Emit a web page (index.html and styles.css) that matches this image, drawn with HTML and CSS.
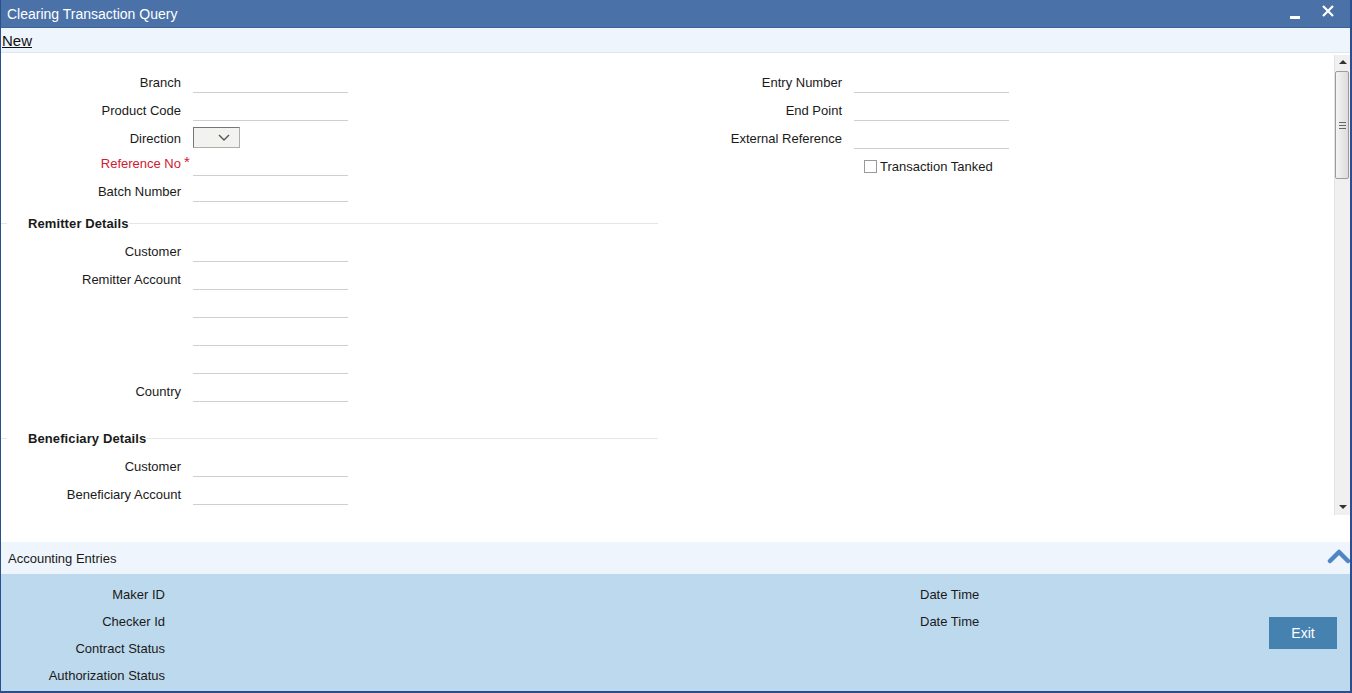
FILE: index.html
```html
<!DOCTYPE html>
<html>
<head>
<meta charset="utf-8">
<title>Clearing Transaction Query</title>
<link rel="stylesheet" href="styles.css">
</head>
<body>
<div class="window">
  <div class="titlebar">
    <span class="title">Clearing Transaction Query</span>
    <div class="win-ctrls">
      <span class="minimize"></span>
      <svg class="close" width="12" height="12" viewBox="0 0 12 12"><path d="M1 1 L11 11 M11 1 L1 11" stroke="#fff" stroke-width="2.2" fill="none"/></svg>
    </div>
  </div>
  <div class="toolbar"><a class="new-link">New</a></div>
  <div class="content">
    <div class="form">
      <div class="top">
        <div class="col-left">
          <div class="row"><label class="lbl">Branch</label><div class="inp"></div></div>
          <div class="row"><label class="lbl">Product Code</label><div class="inp"></div></div>
          <div class="row"><label class="lbl">Direction</label>
            <div class="select"><svg width="12" height="7" viewBox="0 0 12 7"><path d="M1 1 L6 6 L11 1" stroke="#555" stroke-width="1.4" fill="none"/></svg></div>
          </div>
          <div class="row short"><label class="lbl req">Reference No<span class="star">*</span></label><div class="inp"></div></div>
          <div class="row"><label class="lbl">Batch Number</label><div class="inp"></div></div>
        </div>
        <div class="col-right">
          <div class="row"><label class="lbl rl">Entry Number</label><div class="inp rinp"></div></div>
          <div class="row"><label class="lbl rl">End Point</label><div class="inp rinp"></div></div>
          <div class="row"><label class="lbl rl">External Reference</label><div class="inp rinp"></div></div>
          <div class="row check-row"><span class="checkbox"></span><span class="check-text">Transaction Tanked</span></div>
        </div>
      </div>
      <div class="section">
        <div class="sec-head"><span class="sec-title">Remitter Details</span></div>
        <div class="row"><label class="lbl">Customer</label><div class="inp"></div></div>
        <div class="row"><label class="lbl">Remitter Account</label><div class="inp"></div></div>
        <div class="row"><label class="lbl"></label><div class="inp"></div></div>
        <div class="row"><label class="lbl"></label><div class="inp"></div></div>
        <div class="row"><label class="lbl"></label><div class="inp"></div></div>
        <div class="row"><label class="lbl">Country</label><div class="inp"></div></div>
      </div>
      <div class="section sec2">
        <div class="sec-head"><span class="sec-title">Beneficiary Details</span></div>
        <div class="row"><label class="lbl">Customer</label><div class="inp"></div></div>
        <div class="row"><label class="lbl">Beneficiary Account</label><div class="inp"></div></div>
      </div>
    </div>
    <div class="scroll-col">
      <div class="scrollbar">
        <div class="arrow up"></div>
        <div class="thumb"><span class="grip"></span></div>
        <div class="track"></div>
        <div class="arrow down"></div>
      </div>
    </div>
  </div>
  <div class="acc-bar">
    <span>Accounting Entries</span>
    <svg class="chev" width="24" height="16" viewBox="0 0 24 16"><path d="M3 13 L12 4 L21 13" stroke="#4f86c6" stroke-width="4.5" fill="none" stroke-linecap="round" stroke-linejoin="round"/></svg>
  </div>
  <div class="footer">
    <div class="audit">
      <div class="audit-col">
        <div class="arow">Maker ID</div>
        <div class="arow">Checker Id</div>
        <div class="arow">Contract Status</div>
        <div class="arow">Authorization Status</div>
      </div>
      <div class="audit-col2">
        <div class="arow">Date Time</div>
        <div class="arow">Date Time</div>
      </div>
    </div>
    <div class="btn-wrap"><button class="exit">Exit</button></div>
  </div>
</div>
</body>
</html>
```

FILE: styles.css
```css
* { box-sizing: border-box; }
html, body { margin: 0; padding: 0; }
body {
  font-family: "Liberation Sans", Arial, sans-serif;
  font-size: 13px;
  color: #1a1a1a;
  background: #fff;
}
.window {
  width: 1352px;
  height: 693px;
  display: flex;
  flex-direction: column;
  border-left: 1px solid #2b4f8c;
  border-right: 2px solid #2b4f8c;
  border-bottom: 2px solid #2b4f8c;
  overflow: hidden;
}
.titlebar {
  height: 28px;
  flex: none;
  background: #4a72a9;
  display: flex;
  align-items: center;
  justify-content: space-between;
  padding: 0 16px 0 6px;
  border-bottom: 1px solid #3d6498;
}
.title { color: #fff; font-size: 14px; }
.win-ctrls { display: flex; align-items: center; gap: 22px; }
.minimize { width: 10px; height: 3px; background: #fff; margin-top: 7px; }
.close { margin-top: -6px; }
.toolbar {
  height: 25px;
  flex: none;
  background: #eef5fd;
  border-bottom: 1px solid #dfe6ee;
  display: flex;
  align-items: center;
  padding-left: 1px;
}
.new-link { color: #111; text-decoration: underline; font-size: 15px; }
.content {
  height: 489px;
  flex: none;
  display: flex;
  background: #fff;
}
.form { flex: 1; padding-top: 15px; }
.top { display: flex; }
.col-left { width: 657px; }
.col-right { width: 400px; }
.row { height: 28px; display: flex; align-items: center; }
.row.short { height: 25px; }
.lbl {
  width: 180px;
  text-align: right;
  margin-right: 12px;
  white-space: nowrap;
  position: relative;
}
.col-right .lbl { width: 184px; }
.req { color: #d0202e; margin-top: -3px; }
.star {
  position: absolute;
  left: 100%;
  top: -3px;
  margin-left: 3px;
  font-size: 15px;
}
.inp {
  width: 155px;
  height: 22px;
  border-bottom: 1px solid #cfcfcf;
}
.select {
  width: 47px;
  height: 21px;
  margin-top: -2px;
  background: #f2f2ee;
  border: 1px solid #adadad;
  border-top-color: #777;
  border-left-color: #777;
  display: flex;
  align-items: center;
  justify-content: flex-end;
  padding-right: 9px;
}
.check-row { padding-left: 206px; }
.checkbox {
  width: 13px;
  height: 13px;
  border: 1px solid #9a9a9a;
  background: #fff;
  margin-right: 3px;
}
.section { width: 657px; margin-top: 9px; }
.sec2 { margin-top: 24px; }
.sec-head {
  height: 18px;
  display: flex;
  align-items: center;
  margin-bottom: 5px;
}
.sec-head::before {
  content: "";
  width: 6px;
  height: 1px;
  background: #e6e6e6;
  margin-right: 21px;
}
.sec-head::after {
  content: "";
  flex: 1;
  height: 1px;
  background: #e6e6e6;
}
.sec-title { font-weight: bold; font-size: 13px; letter-spacing: 0.1px; }
.scroll-col { width: 16px; flex: none; padding-top: 2px; }
.scrollbar {
  height: 460px;
  display: flex;
  flex-direction: column;
  background: #f0f0f0;
  border-left: 1px solid #e3e3e3;
}
.arrow { height: 16px; flex: none; position: relative; }
.arrow.up::after, .arrow.down::after {
  content: "";
  position: absolute;
  left: 4px;
  border-left: 4px solid transparent;
  border-right: 4px solid transparent;
}
.arrow.up::after { top: 5px; border-bottom: 4px solid #333; }
.arrow.down::after { top: 6px; border-top: 4px solid #333; }
.thumb {
  height: 108px;
  flex: none;
  margin: 0 1px 0 0;
  border: 1px solid #9c9c9c;
  border-radius: 2px;
  background: linear-gradient(to right, #f4f4f4, #dcdcdc);
  display: flex;
  align-items: center;
  justify-content: center;
}
.grip {
  width: 7px;
  height: 7px;
  border-top: 1px solid #666;
  border-bottom: 1px solid #666;
  position: relative;
}
.grip::after {
  content: "";
  position: absolute;
  left: 0; right: 0; top: 2px;
  border-top: 1px solid #666;
}
.track { flex: 1; }
.acc-bar {
  height: 32px;
  flex: none;
  background: #eef5fd;
  display: flex;
  align-items: center;
  justify-content: space-between;
  padding-left: 7px;
  padding-right: 0;
}
.chev { margin-top: -4px; margin-right: -1px; }
.footer {
  flex: 1;
  background: #bdd9ed;
  display: flex;
  justify-content: space-between;
}
.audit { display: flex; padding-top: 7px; }
.audit-col { width: 164px; text-align: right; }
.audit-col2 { margin-left: 755px; }
.arow { height: 27px; line-height: 27px; white-space: nowrap; }
.btn-wrap { padding-top: 43px; padding-right: 13px; }
.exit {
  width: 68px;
  height: 32px;
  background: #4682b0;
  color: #fff;
  border: none;
  font-family: "Liberation Sans", Arial, sans-serif;
  font-size: 14px;
  padding: 0;
}
```
